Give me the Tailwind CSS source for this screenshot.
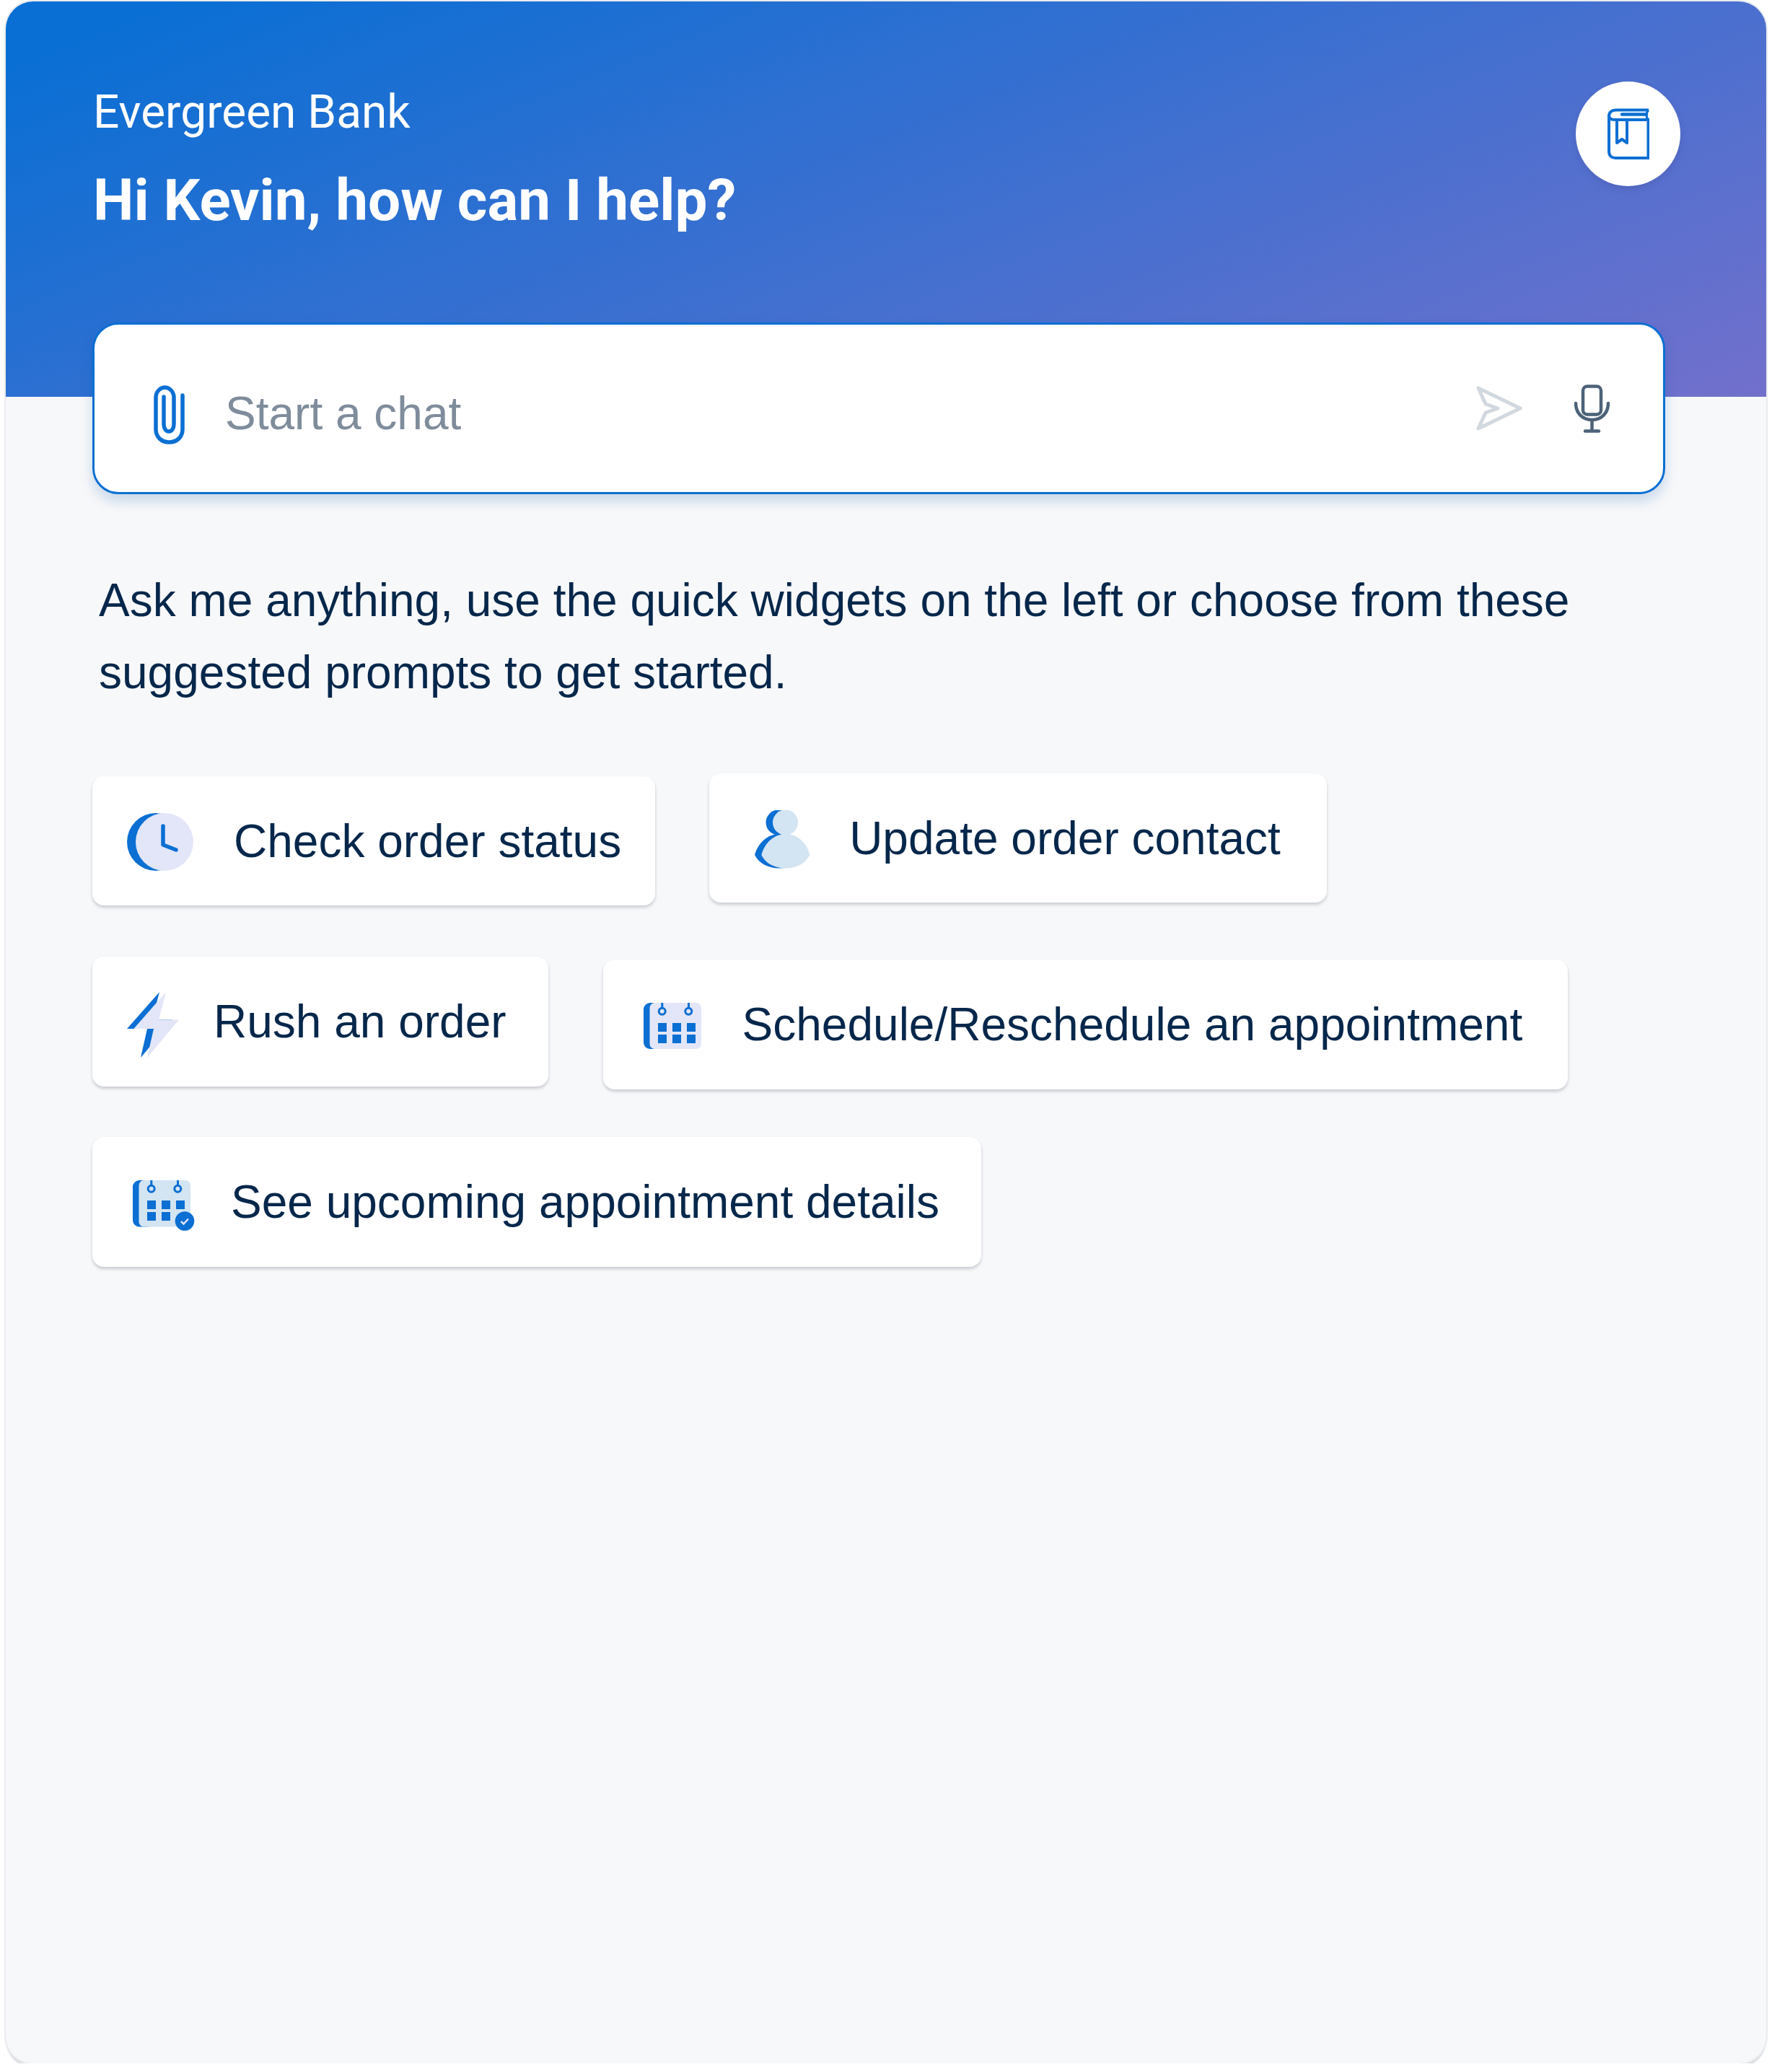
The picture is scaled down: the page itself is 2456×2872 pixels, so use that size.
<!doctype html>
<html lang="en">
	<head>
		<meta charset="utf-8" />
		<meta name="viewport" content="width=device-width, initial-scale=1" />
		<script src="https://cdn.jsdelivr.net/npm/@tailwindcss/browser@4"></script>
	</head>

	<body class="bg-white">
		<div class="pl-[8px] pt-[2px]">
			<div class="h-[2858px] w-[2440px] rounded-[38px] bg-[#f7f8fa] font-['Liberation_Sans',sans-serif] shadow-[0_0_0_2px_#e9ebee,0_6px_2px_rgba(70,85,105,0.2)]">
				<!-- header -->
				<div class="flex h-[548px] justify-between rounded-t-[38px] bg-[linear-gradient(158deg,#0a6fd4_6%,#7270cc)] pl-[121px] pr-[119px] pt-[111px]">
					<div class="font-['Roboto',sans-serif] text-white">
						<div class="mt-[3px] text-[64px] font-normal leading-[80px]">Evergreen Bank</div>
						<h1 class="mt-[32px] text-[80px] font-bold leading-[100px]">Hi Kevin, how can I help?</h1>
					</div>
					<button type="button" class="flex h-[145px] w-[145px] items-center justify-center rounded-full bg-white shadow-[0_4px_8px_rgba(60,70,140,0.25)]">
						<svg class="h-[71px] w-[58px]" viewBox="0 0 58 71" fill="none" stroke="#0b6fd3" stroke-width="4">
							<path d="M57 2.500H12C6 2.500 2 6 2 11V60C2 66 6 69 11 69H56.500V16H10C5 16 2 14 2 10" />
							<path d="M20 8.500H54" stroke-width="4.500" stroke-linecap="round" />
							<path d="M57 2.500C53 6 53 13 57 16" stroke-width="3" />
							<path d="M13 17V48L20 43L27 48V17" stroke-linejoin="round" />
						</svg>
					</button>
				</div>

				<div class="relative -mt-[103px] pl-[120px]">
					<!-- chat box -->
					<div class="flex h-[238px] w-[2180px] items-center rounded-[36px] border-[3px] border-[#0b6fd3] bg-white pl-[82px] pr-[74px] shadow-[0_10px_18px_rgba(11,90,170,0.2)]">
						<svg class="mt-[18px] h-[82px] w-[43px] shrink-0" viewBox="0 0 43 82" fill="none" stroke="#0b6fd3" stroke-width="5.500" stroke-linecap="round">
							<path d="M40 14V61C40 72 32 79 21.500 79C11 79 3 72 3 61V17C3 9 9 3 15.500 3C22 3 28 9 28 17V54C28 60 25 64 21 64C17 64 14 60 14 54V16" />
						</svg>
						<div class="ml-[56px] mt-[14px] flex-1 text-[64px] leading-[76px] text-[#7f8c9c]">Start a chat</div>
						<svg class="h-[62px] w-[64px] shrink-0" viewBox="0 0 64 62" fill="none" stroke="#d2d8df" stroke-width="5" stroke-linejoin="round">
							<path d="M3 3L61 31L3 59L13 37L30 31L13 25Z" />
						</svg>
						<svg class="ml-[72px] h-[67px] w-[49px] shrink-0" viewBox="0 0 49 67" fill="none" stroke="#4c6278" stroke-width="4.500" stroke-linecap="round">
							<rect x="12" y="2.500" width="25" height="39" rx="6" />
							<path d="M2 26C2 39 11 49 24.500 49C38 49 47 39 47 26" />
							<path d="M24.500 49V64M15 64.500H34" />
						</svg>
					</div>

					<p class="mt-[97px] pl-[9px] text-[64px] leading-[100px] text-[#06274b]">Ask me anything, use the quick widgets on the left or choose from these<br />suggested prompts to get started.</p>

					<!-- suggested prompts -->
					<div class="mt-[90px] flex flex-col items-start">
						<div class="flex items-start">
							<button type="button" class="mt-[4px] flex h-[179px] items-center rounded-[16px] bg-white pl-[48px] pr-[47px] text-[64px] text-[#06274b] shadow-[0_3px_4px_rgba(40,50,70,0.22)]">
								<svg class="mt-[3px] h-[80px] w-[92px] shrink-0" viewBox="0 0 92 80">
									<circle cx="40" cy="40" r="40" fill="#0b6fd3" />
									<circle cx="52" cy="40" r="40" fill="#e2e6f8" />
									<path d="M50 18V44L68 51" fill="none" stroke="#0b6fd3" stroke-width="5.500" stroke-linecap="round" stroke-linejoin="round" />
								</svg>
								<span class="ml-[56px] whitespace-nowrap">Check order status</span>
							</button>
							<button type="button" class="ml-[75px] flex h-[179px] items-center rounded-[16px] bg-white pl-[63px] pr-[64px] text-[64px] text-[#06274b] shadow-[0_3px_4px_rgba(40,50,70,0.22)]">
								<svg class="mt-[3px] h-[81px] w-[77px] shrink-0" viewBox="0 0 77 81">
									<circle cx="33" cy="17" r="17.500" fill="#0b6fd3" />
									<path d="M0 62C5 44 19 33 34 33C49 33 63 44 67 62C61 74 49 80.500 34 80.500C19 80.500 6 74 0 62Z" fill="#0b6fd3" />
									<circle cx="42.500" cy="17" r="17.500" fill="#d3e4f2" />
									<path d="M9.300 62C14 44 28 33 43 33C58 33 72 44 76.300 62C70 74 58 80.500 43 80.500C28 80.500 15 74 9.300 62Z" fill="#d3e4f2" />
								</svg>
								<span class="ml-[54px] whitespace-nowrap">Update order contact</span>
							</button>
						</div>
						<div class="mt-[71px] flex items-start">
							<button type="button" class="flex h-[180px] items-center rounded-[16px] bg-white pl-[48px] pr-[58px] text-[64px] text-[#06274b] shadow-[0_3px_4px_rgba(40,50,70,0.22)]">
								<svg class="mt-[9px] h-[91px] w-[72px] shrink-0" viewBox="0 0 72 91">
									<path d="M45 0L0 51H28L19 91L63 38.500H35Z" fill="#0b6fd3" />
									<path d="M54 0L9.300 51H37L28 91L72 38.500H44Z" fill="#e2e6f8" />
								</svg>
								<span class="ml-[48px] whitespace-nowrap">Rush an order</span>
							</button>
							<button type="button" class="ml-[76px] mt-[4px] flex h-[180px] items-center rounded-[16px] bg-white pl-[56px] pr-[63px] text-[64px] text-[#06274b] shadow-[0_3px_4px_rgba(40,50,70,0.22)]">
								<svg class="mt-[4px] h-[64px] w-[80px] shrink-0" viewBox="0 0 80 64">
									<rect width="30" height="64" rx="9" fill="#0b6fd3" />
									<rect x="8.500" width="71.500" height="64" rx="7" fill="#e2e6f8" />
									<g fill="#0b6fd3">
										<rect x="24.300" width="3" height="8" />
										<rect x="61" width="3" height="8" />
										<rect x="20" y="28" width="12" height="12" />
										<rect x="40" y="28" width="12" height="12" />
										<rect x="60" y="28" width="12" height="12" />
										<rect x="20" y="44" width="12" height="12" />
										<rect x="40" y="44" width="12" height="12" />
										<rect x="60" y="44" width="12" height="12" />
									</g>
									<circle cx="25.700" cy="11.700" r="4.500" fill="#e2e6f8" stroke="#0b6fd3" stroke-width="3" />
									<circle cx="62.300" cy="11.700" r="4.500" fill="#e2e6f8" stroke="#0b6fd3" stroke-width="3" />
								</svg>
								<span class="ml-[57px] whitespace-nowrap">Schedule/Reschedule an appointment</span>
							</button>
						</div>
						<button type="button" class="mt-[66px] flex h-[180px] items-center rounded-[16px] bg-white pl-[56px] pr-[58px] text-[64px] text-[#06274b] shadow-[0_3px_4px_rgba(40,50,70,0.22)]">
							<svg class="mt-[10px] h-[70px] w-[86px] shrink-0" viewBox="0 0 86 70">
								<rect width="30" height="64.500" rx="9" fill="#0b6fd3" />
								<rect x="8.500" width="71.500" height="64.500" rx="7" fill="#d3e4f2" />
								<g fill="#0b6fd3">
									<rect x="24.300" width="3" height="8" />
									<rect x="61" width="3" height="8" />
									<rect x="20" y="28" width="12" height="12" />
									<rect x="40" y="28" width="12" height="12" />
									<rect x="60" y="28" width="12" height="12" />
									<rect x="20" y="44" width="12" height="12" />
									<rect x="40" y="44" width="12" height="12" />
								</g>
								<circle cx="25.700" cy="11.700" r="4.500" fill="#d3e4f2" stroke="#0b6fd3" stroke-width="3" />
								<circle cx="62.300" cy="11.700" r="4.500" fill="#d3e4f2" stroke="#0b6fd3" stroke-width="3" />
								<circle cx="72" cy="56.500" r="13.300" fill="#0b6fd3" />
								<path d="M67 57L70.500 60.500L77 53.500" fill="none" stroke="#e2e6f8" stroke-width="2.500" />
							</svg>
							<span class="ml-[50px] whitespace-nowrap">See upcoming appointment details</span>
						</button>
					</div>
				</div>
			</div>
		</div>
	</body>
</html>
